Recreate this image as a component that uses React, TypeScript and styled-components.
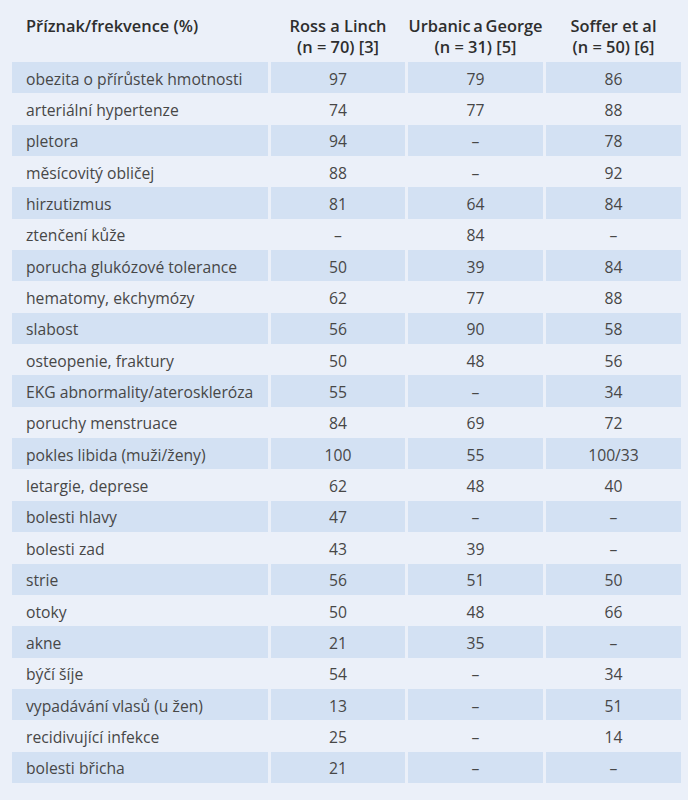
import React from "react";
import styled, { createGlobalStyle } from "styled-components";

const Global = createGlobalStyle`
  html, body { margin: 0; padding: 0; background: #ebf0f9; }
  body { font-family: "Open Sans", "Noto Sans", sans-serif; }
`;

const Page = styled.div`
  width: 688px;
  height: 800px;
  background: #ebf0f9;
  padding: 0 7px 0 12px;
  box-sizing: border-box;
`;

const Grid = styled.div`
  display: grid;
  grid-template-columns: 256px 134px 135px 135px;
  column-gap: 3px;
  grid-auto-rows: 31.35px;
`;

const HeadRow = styled.div`
  display: grid;
  grid-template-columns: 256px 134px 135px 135px;
  column-gap: 3px;
  height: 62px;
  padding-top: 15px;
  box-sizing: border-box;
`;

const HeadCell = styled.div<{ $left?: boolean }>`
  font-size: 16.4px;
  font-weight: 600;
  line-height: 21px;
  color: #2e2e2e;
  text-align: ${(p) => (p.$left ? "left" : "center")};
  padding-left: ${(p) => (p.$left ? "14px" : "0")};
  white-space: nowrap;
`;

const Cell = styled.div<{ $shade: boolean; $left?: boolean }>`
  background: ${(p) => (p.$shade ? "#d3e1f3" : "transparent")};
  font-size: 15.7px;
  color: #474747;
  display: flex;
  align-items: center;
  justify-content: ${(p) => (p.$left ? "flex-start" : "center")};
  padding-left: ${(p) => (p.$left ? "14px" : "0")};
  padding-top: 2px;
  box-sizing: border-box;
  white-space: nowrap;
`;

const D = "–";
const rows: [string, string, string, string][] = [
  ["obezita o přírůstek hmotnosti", "97", "79", "86"],
  ["arteriální hypertenze", "74", "77", "88"],
  ["pletora", "94", D, "78"],
  ["měsícovitý obličej", "88", D, "92"],
  ["hirzutizmus", "81", "64", "84"],
  ["ztenčení kůže", D, "84", D],
  ["porucha glukózové tolerance", "50", "39", "84"],
  ["hematomy, ekchymózy", "62", "77", "88"],
  ["slabost", "56", "90", "58"],
  ["osteopenie, fraktury", "50", "48", "56"],
  ["EKG abnormality/ateroskleróza", "55", D, "34"],
  ["poruchy menstruace", "84", "69", "72"],
  ["pokles libida (muži/ženy)", "100", "55", "100/33"],
  ["letargie, deprese", "62", "48", "40"],
  ["bolesti hlavy", "47", D, D],
  ["bolesti zad", "43", "39", D],
  ["strie", "56", "51", "50"],
  ["otoky", "50", "48", "66"],
  ["akne", "21", "35", D],
  ["býčí šíje", "54", D, "34"],
  ["vypadávání vlasů (u žen)", "13", D, "51"],
  ["recidivující infekce", "25", D, "14"],
  ["bolesti břicha", "21", D, D],
];

export default function App() {
  return (
    <Page>
      <Global />
      <HeadRow>
        <HeadCell $left>Příznak/frekvence (%)</HeadCell>
        <HeadCell>
          Ross a Linch
          <br />
          (n = 70) [3]
        </HeadCell>
        <HeadCell>
          Urbanic{"\u2009"}a{"\u2009"}George
          <br />
          (n = 31) [5]
        </HeadCell>
        <HeadCell>
          Soffer et al
          <br />
          (n = 50) [6]
        </HeadCell>
      </HeadRow>
      <Grid>
        {rows.map((r, i) =>
          r.map((v, j) => (
            <Cell key={`${i}-${j}`} $shade={i % 2 === 0} $left={j === 0}>
              {v}
            </Cell>
          ))
        )}
      </Grid>
    </Page>
  );
}
